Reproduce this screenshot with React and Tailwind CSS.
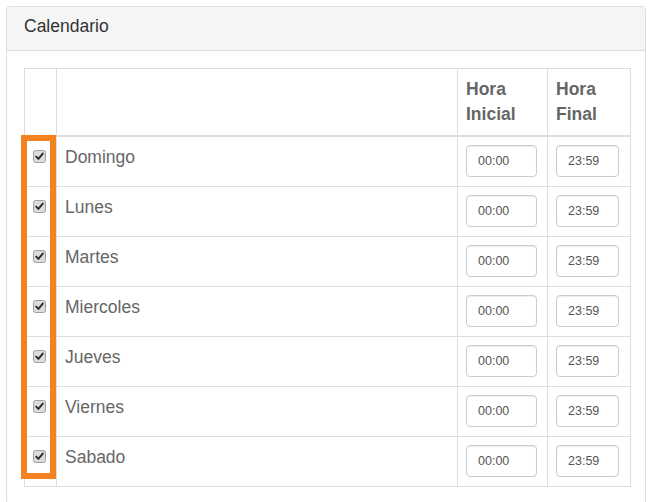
import React from "react";

const days = ["Domingo", "Lunes", "Martes", "Miercoles", "Jueves", "Viernes", "Sabado"];

function Check() {
  return (
    <svg width="13" height="13" viewBox="0 0 13 13" className="block">
      <rect x="0.5" y="0.5" width="12" height="12" rx="2" fill="#dcdcdc" stroke="#a0a0a0" />
      <path d="M3.2 6.6 L5.4 8.9 L9.8 3.6" fill="none" stroke="#2a2a2a" strokeWidth="1.9" strokeLinecap="round" strokeLinejoin="round" />
    </svg>
  );
}

function TimeInput({ value, w }) {
  return (
    <div
      className={`${w} h-[32px] border border-[#ccc] rounded-[4px] bg-white flex items-center pl-[11px] text-[12.5px] text-[#555] shadow-[inset_0_1px_1px_rgba(0,0,0,0.075)]`}
    >
      {value}
    </div>
  );
}

export default function App() {
  return (
    <div
      className="w-[649px] h-[502px] overflow-hidden bg-white pt-[6px] pl-[6px]"
      style={{ fontFamily: '"Liberation Sans", Arial, sans-serif' }}
    >
      <div className="w-[640px] border border-[#ddd] rounded-[4px] bg-white">
        <div className="h-[44px] bg-[#f5f5f5] border-b border-[#ddd] rounded-t-[3px] px-[17px] pt-[7px] text-[17.5px] leading-[25px] text-[#333]">
          Calendario
        </div>
        <div className="pt-[17px] pl-[17px] pb-[17px]">
          <div className="relative w-[607px] border border-[#ddd] text-[17.5px] leading-[25px] text-[#666]">
            <div className="flex h-[68px] border-b-2 border-[#ddd]">
              <div className="w-[31px]" />
              <div className="w-[401px] border-l border-[#ddd]" />
              <div className="w-[90px] border-l border-[#ddd] px-[8px] pt-[8px] font-bold">
                Hora Inicial
              </div>
              <div className="w-[83px] border-l border-[#ddd] px-[8px] pt-[8px] font-bold">
                Hora Final
              </div>
            </div>
            {days.map((d, i) => (
              <div
                key={d}
                className={
                  i < days.length - 1
                    ? "flex h-[50px] border-b border-[#ddd]"
                    : "flex h-[49px]"
                }
              >
                <div className="w-[31px] pl-[8px] pt-[13px]">
                  <Check />
                </div>
                <div className="w-[401px] border-l border-[#ddd] px-[8px] pt-[8px]">{d}</div>
                <div className="w-[90px] border-l border-[#ddd] px-[8px] pt-[8px]">
                  <TimeInput value="00:00" w="w-[71px]" />
                </div>
                <div className="w-[83px] border-l border-[#ddd] px-[8px] pt-[8px]">
                  <TimeInput value="23:59" w="w-[63px]" />
                </div>
              </div>
            ))}
            <div className="absolute left-[-4px] top-[66px] w-[35px] h-[344px] border-[6px] border-[#f58220]" />
          </div>
        </div>
      </div>
    </div>
  );
}
